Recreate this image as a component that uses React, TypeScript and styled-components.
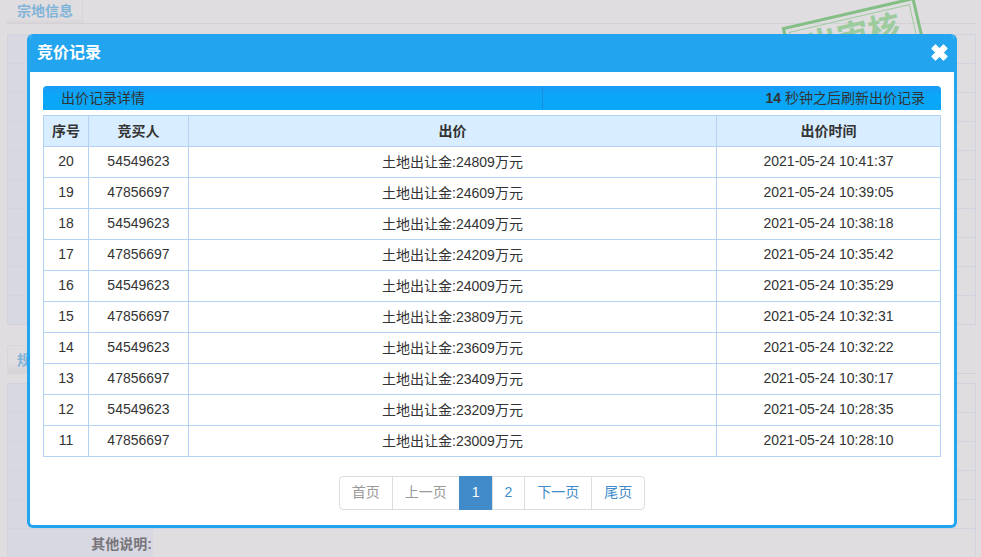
import styled, { createGlobalStyle } from 'styled-components'

const GlobalStyle = createGlobalStyle`
  html, body {
    margin: 0;
    padding: 0;
    height: 100%;
    overflow: hidden;
    background: #dfdde0;
    font-family: "Liberation Sans", Arial, "Noto Sans CJK SC", sans-serif;
    font-size: 14px;
    color: #333;
  }
`

const Page = styled.div`
  position: relative;
  width: 981px;
  height: 557px;
  overflow: hidden;
  box-sizing: border-box;
  padding: 0 5px 0 7px;
`

const TabRow = styled.div`
  height: 23px;
  border-bottom: 1px solid #d3d1d6;
  margin-bottom: 10px;
`

const Tab = styled.div`
  width: 76px;
  height: 23px;
  box-sizing: border-box;
  padding: 0 0 0 10px;
  background: linear-gradient(#dfdde0 80%, #d8d6d8);
  border-right: 1px solid #d8d6da;
  color: #7fb3d8;
  font-size: 14px;
  font-weight: bold;
`

const SecondTabRow = styled(TabRow)`
  height: 28px;
  margin: 20px 0 9px;
`

const SecondTab = styled(Tab)`
  height: 28px;
  padding: 3px 0 0 9px;
  border: 1px solid #d8d6da;
  border-radius: 3px 3px 0 0;
  background: linear-gradient(#dfdde0 60%, #d6d4d6);
`

const BgPanel = styled.div<{ $height: number }>`
  height: ${p => p.$height}px;
  box-sizing: border-box;
  border: 1px solid #d3d3df;
  background: repeating-linear-gradient(#dfdde0 0, #dfdde0 28px, #d3d3df 28px, #d3d3df 29px);
  overflow: hidden;
  position: relative;
`

const LabelColumn = styled.div`
  width: 145px;
  height: 100%;
  background: repeating-linear-gradient(#d8d8e2 0, #d8d8e2 28px, #d3d3df 28px, #d3d3df 29px);
`

const OtherRow = styled.div`
  position: absolute;
  left: 0;
  bottom: 0;
  width: 145px;
  height: 27px;
  box-sizing: border-box;
  padding: 3px 1px 0 0;
  text-align: right;
  background: #d8d8e2;
  font-size: 14px;
  font-weight: bold;
  color: #77757a;
  white-space: nowrap;
`

const Stamp = styled.div`
  position: absolute;
  left: 790px;
  top: 11px;
  width: 136px;
  height: 90px;
  box-sizing: border-box;
  padding-top: 6px;
  border: 3px solid #83bf85;
  outline: 1px solid #9fcba2;
  outline-offset: -7px;
  transform: rotate(-13deg);
  color: #9ccb9e;
  font-size: 32px;
  font-weight: bold;
  text-align: center;
  line-height: 32px;
  white-space: nowrap;
`

const Modal = styled.div`
  position: absolute;
  left: 27px;
  top: 34px;
  width: 930px;
  height: 494px;
  box-sizing: border-box;
  border: 3px solid #22a4ee;
  border-top: 0;
  border-radius: 6px;
  background: #fff;
  overflow: hidden;
`

const ModalHeader = styled.div`
  height: 38px;
  margin: 0 -3px;
  padding: 0 9px 0 10px;
  background: #22a4ee;
  color: #fff;
  display: flex;
  align-items: center;
  justify-content: space-between;
`

const ModalTitle = styled.span`
  font-size: 16px;
  font-weight: bold;
  margin-bottom: 4px;
`

const CloseIcon = styled.svg`
  width: 17px;
  height: 17px;
  display: block;
  margin-bottom: 2px;
`

const ModalBody = styled.div`
  padding: 14px 13px 0;
`

const InfoBar = styled.div`
  height: 24px;
  display: flex;
  color: #333;
  font-size: 14px;
  line-height: 25px;
`

const InfoLeft = styled.div`
  width: 499px;
  box-sizing: border-box;
  padding-left: 18px;
  border-radius: 4px 0 0 0;
  background: linear-gradient(#1b9af7, #0aa7f8 40%);
`

const InfoRight = styled.div`
  flex: 1;
  box-sizing: border-box;
  padding-right: 16px;
  text-align: right;
  border-radius: 0 4px 0 0;
  border-left: 1px solid #1a8fe0;
  background: linear-gradient(#1b9af7, #0aa7f8 40%);
`

const BidTable = styled.table`
  width: 897px;
  margin-top: 5px;
  border-collapse: collapse;
  table-layout: fixed;
  font-size: 14px;
  color: #333;

  th, td {
    border: 1px solid #b5d2f5;
    padding: 0 0 2px;
    height: 28px;
    text-align: center;
  }

  th {
    background: #d8edff;
    font-size: 14px;
  }

  td {
    background: #fff;
  }
`

const Pagination = styled.ul`
  display: flex;
  justify-content: center;
  list-style: none;
  margin: 19px 0 0 1px;
  padding: 0;
`

const PageItem = styled.li<{ $active?: boolean; $disabled?: boolean }>`
  height: 34px;
  box-sizing: border-box;
  padding: 0 12px;
  line-height: 31px;
  font-size: 14px;
  border: 1px solid ${p => (p.$active ? '#428bca' : '#ddd')};
  margin-left: -1px;
  background: ${p => (p.$active ? '#428bca' : '#fff')};
  color: ${p => (p.$active ? '#fff' : p.$disabled ? '#999' : '#428bca')};

  &:first-child {
    border-radius: 4px 0 0 4px;
  }

  &:last-child {
    border-radius: 0 4px 4px 0;
  }
`

const bids = [
  [20, '54549623', 24809, '10:41:37'],
  [19, '47856697', 24609, '10:39:05'],
  [18, '54549623', 24409, '10:38:18'],
  [17, '47856697', 24209, '10:35:42'],
  [16, '54549623', 24009, '10:35:29'],
  [15, '47856697', 23809, '10:32:31'],
  [14, '54549623', 23609, '10:32:22'],
  [13, '47856697', 23409, '10:30:17'],
  [12, '54549623', 23209, '10:28:35'],
  [11, '47856697', 23009, '10:28:10'],
]

const App = () => {
  return (
    <Page>
      <GlobalStyle />
      <TabRow>
        <Tab>宗地信息</Tab>
      </TabRow>
      <BgPanel $height={291}>
        <LabelColumn />
      </BgPanel>
      <SecondTabRow>
        <SecondTab>规</SecondTab>
      </SecondTabRow>
      <BgPanel $height={175}>
        <LabelColumn />
        <OtherRow>其他说明:</OtherRow>
      </BgPanel>
      <Stamp>出审核</Stamp>

      <Modal>
        <ModalHeader>
          <ModalTitle>竞价记录</ModalTitle>
          <CloseIcon viewBox="0 0 17 17">
            <path d="M1 4.5 4.5 1 8.5 5 12.5 1 16 4.5 12 8.5 16 12.5 12.5 16 8.5 12 4.5 16 1 12.5 5 8.5Z" fill="#fff" stroke="#fff" strokeWidth="1.2" strokeLinejoin="round" />
          </CloseIcon>
        </ModalHeader>
        <ModalBody>
          <InfoBar>
            <InfoLeft>出价记录详情</InfoLeft>
            <InfoRight>
              <b>14</b> 秒钟之后刷新出价记录
            </InfoRight>
          </InfoBar>
          <BidTable>
            <colgroup>
              <col width={45} />
              <col width={100} />
              <col width={528} />
              <col width={224} />
            </colgroup>
            <thead>
              <tr>
                <th>序号</th>
                <th>竞买人</th>
                <th>出价</th>
                <th>出价时间</th>
              </tr>
            </thead>
            <tbody>
              {bids.map(([no, buyer, price, time]) => (
                <tr key={no}>
                  <td>{no}</td>
                  <td>{buyer}</td>
                  <td>土地出让金:{price}万元</td>
                  <td>2021-05-24 {time}</td>
                </tr>
              ))}
            </tbody>
          </BidTable>
          <Pagination>
            <PageItem $disabled>首页</PageItem>
            <PageItem $disabled>上一页</PageItem>
            <PageItem $active>1</PageItem>
            <PageItem>2</PageItem>
            <PageItem>下一页</PageItem>
            <PageItem>尾页</PageItem>
          </Pagination>
        </ModalBody>
      </Modal>
    </Page>
  )
}

export default App
